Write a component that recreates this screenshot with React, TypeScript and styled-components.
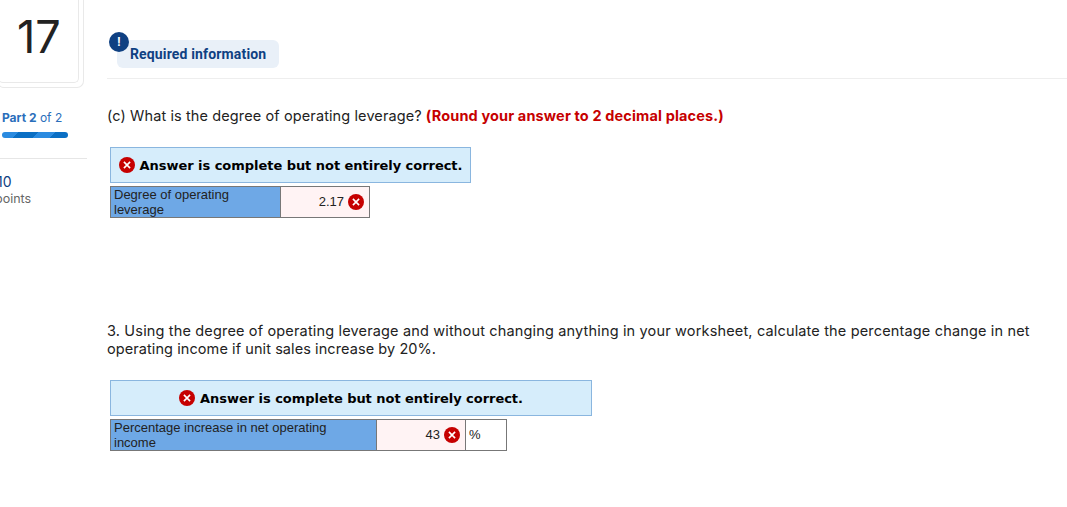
import styled, { createGlobalStyle } from "styled-components";

interface IAnswer {
  label: string;
  value: string;
  unit?: string;
  labelWidth: number;
  bannerWidth: number;
}

const leverageAnswer: IAnswer = {
  label: "Degree of operating leverage",
  value: "2.17",
  labelWidth: 170,
  bannerWidth: 361,
};

const incomeAnswer: IAnswer = {
  label: "Percentage increase in net operating income",
  value: "43",
  unit: "%",
  labelWidth: 266,
  bannerWidth: 482,
};

const WrongIcon = () => (
  <Icon viewBox="0 0 16 16">
    <circle cx="8" cy="8" r="8" fill="#c60000" />
    <path d="M4.9 4.9l6.2 6.2M11.1 4.9l-6.2 6.2" stroke="#fff" strokeWidth="1.6" />
  </Icon>
);

const Answer = ({ label, value, unit, labelWidth, bannerWidth }: IAnswer) => (
  <AnswerWrapper>
    <Banner $width={bannerWidth}>
      <WrongIcon />
      <span>Answer is complete but not entirely correct.</span>
    </Banner>
    <AnswerRow>
      <LabelCell $width={labelWidth}>{label}</LabelCell>
      <ValueCell>
        <Value>{value}</Value>
        <WrongIcon />
      </ValueCell>
      {unit && <UnitCell>{unit}</UnitCell>}
    </AnswerRow>
  </AnswerWrapper>
);

const App = () => {
  return (
    <>
      <GlobalStyle />
      <Page>
        <Sidebar>
          <NumberOuter>
            <NumberInner>17</NumberInner>
          </NumberOuter>
          <Part>
            <b>Part 2</b> of 2
          </Part>
          <Progress />
          <Points>
            <Score>10</Score>
            <PointsLabel>points</PointsLabel>
          </Points>
        </Sidebar>
        <Content>
          <Header>
            <Required>
              Required information
              <Alert>!</Alert>
            </Required>
          </Header>
          <FirstQuestion>
            <Question $spacing={0.11}>(c) What is the degree of operating leverage?</Question>
            <Hint>(Round your answer to 2 decimal places.)</Hint>
          </FirstQuestion>
          <Answer {...leverageAnswer} />
          <SecondQuestion>
            <Question $spacing={0.16}>
              3. Using the degree of operating leverage and without changing anything in your
              worksheet, calculate the percentage change in net
            </Question>
            <Question $spacing={0.08}>operating income if unit sales increase by 20%.</Question>
          </SecondQuestion>
          <Answer {...incomeAnswer} />
        </Content>
      </Page>
    </>
  );
};
export default App;

const GlobalStyle = createGlobalStyle`
  * {
    box-sizing: border-box;
  }
  body {
    margin: 0;
    background: #fff;
    overflow: hidden;
  }
`;

const Page = styled.div`
  display: flex;
  width: 1067px;
  height: 507px;
  overflow: hidden;
  color: #222;
  font-family: Inter, "Liberation Sans", sans-serif;
`;

const Sidebar = styled.aside`
  flex: none;
  width: 87px;
`;

const NumberOuter = styled.div`
  width: 87px;
  height: 88px;
  margin-left: -3px;
  padding-right: 4px;
  border: 1px solid #e9e9e9;
  border-top: 0;
  border-radius: 0 0 7px 7px;
`;

const NumberInner = styled.div`
  height: 83px;
  padding: 9px 0 0 18px;
  border: 1px solid #e9e9e9;
  border-top: 0;
  border-radius: 0 0 5px 5px;
  font-size: 45px;
  line-height: 56px;
`;

const Part = styled.div`
  margin: 21px 0 0 2px;
  color: #2a6ebb;
  font-size: 12px;
  line-height: 18px;
  white-space: nowrap;
`;

const Progress = styled.div`
  width: 66px;
  height: 6px;
  margin: 5px 0 0 2px;
  border-radius: 3px;
  background: linear-gradient(
    135deg,
    #2b8be0 0 12px,
    #0b6fc4 12px 26px,
    #2b8be0 26px 38px,
    #0b6fc4 38px
  );
`;

const Points = styled.div`
  margin-top: 20px;
  padding-top: 14px;
  border-top: 1px solid #e6e6e6;
`;

const Score = styled.div`
  margin-left: -3px;
  color: #0f4082;
  font-size: 14px;
  line-height: 18px;
`;

const PointsLabel = styled.div`
  margin-left: -5px;
  color: #666;
  font-size: 12.5px;
  line-height: 15px;
`;

const Content = styled.main`
  width: 960px;
  margin-left: 20px;
`;

const Header = styled.header`
  height: 79px;
  padding: 40px 0 0 10px;
  border-bottom: 1px solid #eee;
`;

const Required = styled.div`
  position: relative;
  width: 162px;
  height: 28px;
  padding-left: 13px;
  border-radius: 6px;
  background: #e9f0f8;
  color: #0f4082;
  font-family: Roboto, sans-serif;
  font-size: 14px;
  font-weight: 700;
  line-height: 29px;
  letter-spacing: 0.15px;
  white-space: nowrap;
`;

const Alert = styled.span`
  position: absolute;
  top: -8px;
  left: -8px;
  width: 20px;
  height: 20px;
  border-radius: 50%;
  background: #0f4082;
  color: #fff;
  font-size: 12px;
  line-height: 20px;
  text-align: center;
`;

const FirstQuestion = styled.div`
  display: flex;
  gap: 4px;
  margin-top: 28px;
`;

const SecondQuestion = styled.div`
  margin-top: 104px;
`;

const Question = styled.div<{ $spacing: number }>`
  font-size: 14.5px;
  line-height: 18px;
  letter-spacing: ${({ $spacing }) => $spacing}px;
  white-space: nowrap;
`;

const Hint = styled.span`
  color: #c60000;
  font-size: 14.5px;
  font-weight: 700;
  line-height: 18px;
  letter-spacing: 0.14px;
  white-space: nowrap;
`;

const AnswerWrapper = styled.div`
  margin: 22px 0 0 3px;
`;

const Banner = styled.div<{ $width: number }>`
  display: flex;
  align-items: center;
  justify-content: center;
  gap: 5px;
  width: ${({ $width }) => $width}px;
  height: 36px;
  border: 1px solid #8ab6df;
  background: #d6edfb;
  color: #000;
  font-family: "DejaVu Sans", sans-serif;
  font-size: 13px;
  font-weight: 700;
  letter-spacing: -0.04px;
  white-space: nowrap;
`;

const AnswerRow = styled.div`
  display: inline-flex;
  height: 32px;
  margin-top: 3px;
  border: 1px solid #777;
  font-family: "Liberation Sans", sans-serif;
  font-size: 13px;
  line-height: 15px;
  vertical-align: top;
`;

const LabelCell = styled.div<{ $width: number }>`
  width: ${({ $width }) => $width}px;
  padding: 0 20px 0 3px;
  border-right: 1px solid #777;
  background: #6ea8e6;
`;

const ValueCell = styled.div`
  display: flex;
  align-items: center;
  justify-content: flex-end;
  gap: 4px;
  width: 88px;
  padding-right: 5px;
  background: #fff3f4;
`;

const Value = styled.span`
  padding-bottom: 1px;
`;

const UnitCell = styled.div`
  width: 41px;
  padding-left: 3px;
  border-left: 1px solid #777;
  line-height: 30px;
`;

const Icon = styled.svg`
  flex: none;
  width: 16px;
  height: 16px;
`;
